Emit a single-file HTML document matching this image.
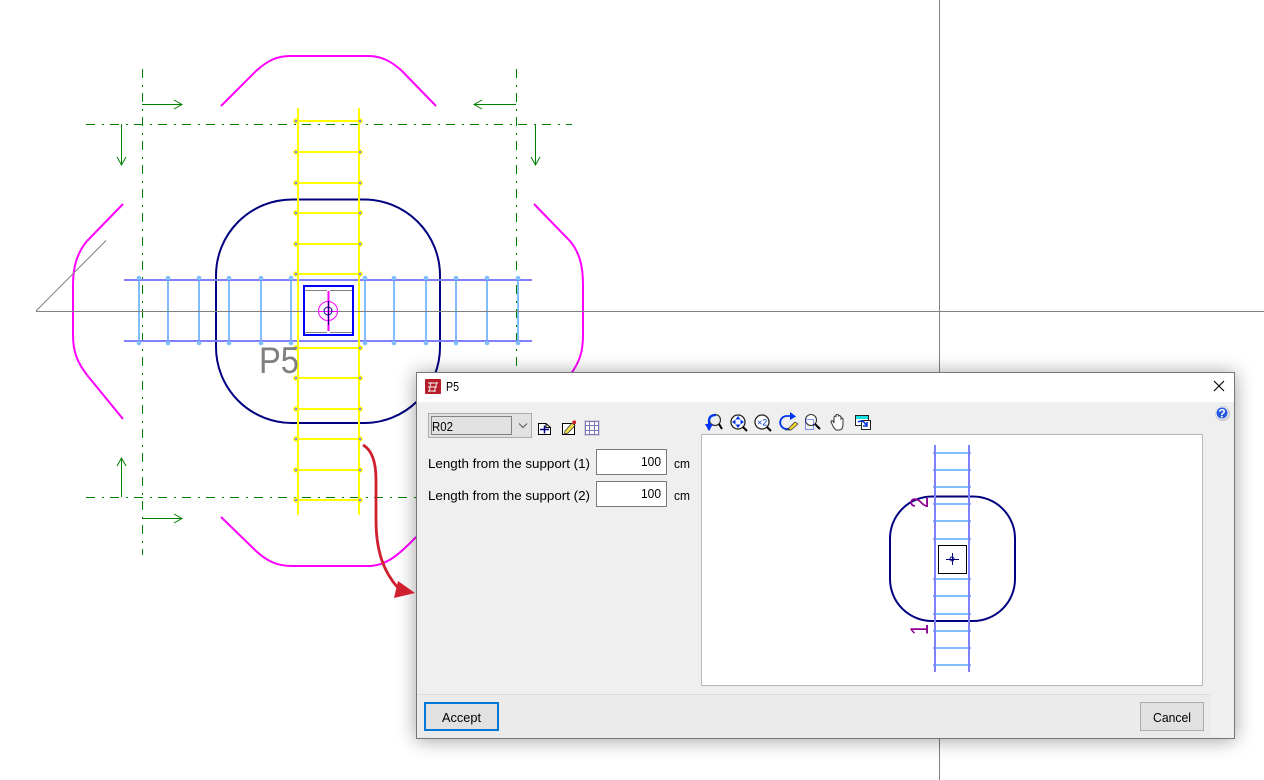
<!DOCTYPE html>
<html><head><meta charset="utf-8"><title>P5</title>
<style>
html,body{margin:0;padding:0;background:#fff;width:1264px;height:780px;overflow:hidden}
svg{position:absolute;left:0;top:0}
text{font-family:"Liberation Sans",sans-serif}
#dlg{position:absolute;left:416px;top:372px;width:817px;height:365px;border:1px solid #777;background:#efefef;box-shadow:0 1px 18px rgba(0,0,0,.38)}
</style></head><body>
<svg width="1264" height="780">
<g fill="none">
<!-- navy -->
<rect x="216" y="199.500" width="224" height="223.500" rx="76" ry="76" stroke="#000080" stroke-width="2"/>
<!-- magenta -->
<g stroke="#ff00ff" stroke-width="2">
<path d="M221 106L256 71C268 60 278 56 290 56H368C380 56 390 60 402 71L436 106"/>
<path d="M123 204L87 241C77 253 73 267 73 285V335C73 351 77 362 87 375L123 419"/>
<path d="M534 204L570 241C580 253 583 267 583 285V335C583 351 580 362 570 375L540 405"/>
<path d="M221 517L256 551C268 562 278 566 292 566H368C384 566 396 558 416 537"/>
</g>
<!-- green -->
<g stroke="#008000" stroke-width="1">
<g stroke-dasharray="9 7 2 6">
<path d="M142.500 69V555"/><path d="M516.500 69V372"/>
<path d="M86 124.500H572"/><path d="M86 497.500H416"/>
</g>
<path d="M142 104.500H181M174 100L182 104.500L174 109"/>
<path d="M142 518.500H181M174 514L182 518.500L174 523"/>
<path d="M516 104.500H475M482 100L474 104.500L482 109"/>
<path d="M121.500 124V164M117 157L121.500 165L126 157"/>
<path d="M535.500 124V164M531 157L535.500 165L540 157"/>
<path d="M121.500 497V459M117 466L121.500 458L126 466"/>
</g>
<!-- light blue rungs -->
<g stroke="#80bfff" stroke-width="2">
<path d="M139 277V344M168 277V344M199 277V344M229 277V344M261 277V344M291 277V344M365 277V344M394 277V344M426 277V344M456 277V344M487 277V344M518 277V344"/>
</g>
<g stroke="#8080ff" stroke-width="2"><path d="M124 280H532M124 341H532"/></g>
<!-- yellow -->
<g stroke="#ffff00" stroke-width="2">
<path d="M298 108V515M359 108V515"/>
<path d="M296 121H361M296 152H361M296 183H361M296 213H361M296 244H361M296 274H361M296 348H361M296 378H361M296 409H361M296 439H361M296 470H361M296 500H361"/>
</g>
<g stroke="#808080" stroke-width="1">
<path d="M939.500 0V780M36 311.500H1264M36 311L106 240.500"/>
</g>
</g>
<!-- dots -->
<g fill="#8080ff" stroke="#ffff00" stroke-width="1.400">
<circle cx="296" cy="121" r="2"/><circle cx="360" cy="121" r="2"/>
<circle cx="296" cy="152" r="2"/><circle cx="360" cy="152" r="2"/>
<circle cx="296" cy="183" r="2"/><circle cx="360" cy="183" r="2"/>
<circle cx="296" cy="213" r="2"/><circle cx="360" cy="213" r="2"/>
<circle cx="296" cy="244" r="2"/><circle cx="360" cy="244" r="2"/>
<circle cx="296" cy="274" r="2"/><circle cx="360" cy="274" r="2"/>
<circle cx="296" cy="348" r="2"/><circle cx="360" cy="348" r="2"/>
<circle cx="296" cy="378" r="2"/><circle cx="360" cy="378" r="2"/>
<circle cx="296" cy="409" r="2"/><circle cx="360" cy="409" r="2"/>
<circle cx="296" cy="439" r="2"/><circle cx="360" cy="439" r="2"/>
<circle cx="296" cy="470" r="2"/><circle cx="360" cy="470" r="2"/>
<circle cx="296" cy="500" r="2"/><circle cx="360" cy="500" r="2"/>
</g>
<g fill="#80bfff">
<circle cx="139" cy="278" r="2.300"/><circle cx="168" cy="278" r="2.300"/><circle cx="199" cy="278" r="2.300"/><circle cx="229" cy="278" r="2.300"/><circle cx="261" cy="278" r="2.300"/><circle cx="291" cy="278" r="2.300"/><circle cx="365" cy="278" r="2.300"/><circle cx="394" cy="278" r="2.300"/><circle cx="426" cy="278" r="2.300"/><circle cx="456" cy="278" r="2.300"/><circle cx="487" cy="278" r="2.300"/><circle cx="518" cy="278" r="2.300"/>
<circle cx="139" cy="343" r="2.300"/><circle cx="168" cy="343" r="2.300"/><circle cx="199" cy="343" r="2.300"/><circle cx="229" cy="343" r="2.300"/><circle cx="261" cy="343" r="2.300"/><circle cx="291" cy="343" r="2.300"/><circle cx="365" cy="343" r="2.300"/><circle cx="394" cy="343" r="2.300"/><circle cx="426" cy="343" r="2.300"/><circle cx="456" cy="343" r="2.300"/><circle cx="487" cy="343" r="2.300"/><circle cx="518" cy="343" r="2.300"/>
</g>
<!-- column -->
<g fill="none">
<path d="M305 290.500H327M330 290.500H352M305 332.500H327M330 332.500H352" stroke="#808080"/>
<rect x="304" y="286" width="49" height="49" stroke="#0000ff" stroke-width="2"/>
<path d="M328.500 291V331" stroke="#ff00ff" stroke-width="2"/>
<path d="M318 311.500H338" stroke="#ff00ff"/>
<circle cx="328" cy="311" r="9.500" stroke="#ff00ff"/>
<circle cx="328" cy="311" r="4" stroke="#000080"/>
<path d="M328.500 301V325" stroke="#000080"/>
</g>
<text x="259" y="373" font-size="37" fill="#808080" textLength="40" lengthAdjust="spacingAndGlyphs">P5</text>
</svg>

<div id="dlg"></div>

<svg width="1264" height="780">
<!-- title bar -->
<rect x="417" y="373" width="817" height="29" fill="#fff"/>
<rect x="425" y="379" width="16" height="15" rx="1" fill="#b51e28"/>
<path d="M428 383H438M428 387H437M428 391H436M431 382L429 392M437 382L434 392" stroke="#e8d0d0" stroke-width="1.200" fill="none"/>
<text x="446" y="391" font-size="13" fill="#000" textLength="13" lengthAdjust="spacingAndGlyphs">P5</text>
<path d="M1214 381L1224 391M1224 381L1214 391" stroke="#000" stroke-width="1.100" fill="none"/>
<!-- footer -->
<rect x="417" y="695" width="794" height="43" fill="#ebebeb"/>
<rect x="417" y="694" width="794" height="1" fill="#dcdcdc"/>
<!-- combo -->
<rect x="428.500" y="413.500" width="103" height="24" fill="#e1e1e1" stroke="#adadad"/>
<rect x="431.500" y="416.500" width="80" height="18" fill="none" stroke="#222" stroke-dasharray="1 1" shape-rendering="crispEdges"/>
<text x="432" y="431" font-size="13" fill="#000" textLength="21" lengthAdjust="spacingAndGlyphs">R02</text>
<path d="M519 423.500L523 427.500L527 423.500" fill="none" stroke="#555" stroke-width="1"/>
<!-- small icons -->
<path d="M538.500 423.500H546L550.500 427.500V434.500H538.500Z" fill="#fff" stroke="#000"/>
<path d="M546 423.500V427.500H550" fill="none" stroke="#000"/>
<path d="M540 429.500H549M544.500 425.500V433.500" stroke="#000080" stroke-width="1.500"/>
<path d="M562.500 423.500H574.500V434.500H562.500Z" fill="#fff" stroke="#000"/>
<path d="M565 431L572 423L575 425.500L568 433L564.500 434Z" fill="#f5e050" stroke="#333" stroke-width=".8"/>
<rect x="572.500" y="420.500" width="3.500" height="3.500" rx="1" fill="#d0202a"/>
<rect x="584" y="420" width="16" height="16" fill="#d4d4d4"/>
<path d="M585.500 421.500H598.500V434.500H585.500ZM585.500 425.500H598.500M585.500 430.500H598.500M589.500 421.500V434.500M594.500 421.500V434.500" fill="#fff" stroke="#7878b8"/>
<!-- labels -->
<text x="428" y="468" font-size="13" fill="#000" textLength="162" lengthAdjust="spacingAndGlyphs">Length from the support (1)</text>
<text x="428" y="500" font-size="13" fill="#000" textLength="162" lengthAdjust="spacingAndGlyphs">Length from the support (2)</text>
<rect x="596.500" y="449.500" width="70" height="25" fill="#fff" stroke="#7a7a7a"/>
<rect x="596.500" y="481.500" width="70" height="25" fill="#fff" stroke="#7a7a7a"/>
<text x="641" y="466" font-size="13" fill="#000" textLength="20" lengthAdjust="spacingAndGlyphs">100</text>
<text x="641" y="498" font-size="13" fill="#000" textLength="20" lengthAdjust="spacingAndGlyphs">100</text>
<text x="674" y="468" font-size="13" fill="#000" textLength="16" lengthAdjust="spacingAndGlyphs">cm</text>
<text x="674" y="500" font-size="13" fill="#000" textLength="16" lengthAdjust="spacingAndGlyphs">cm</text>
<!-- toolbar icons -->
<g fill="none">
<!-- 1 -->
<circle cx="715" cy="420" r="5.500" stroke="#333" stroke-width="1.200"/><path d="M719 424L722 429" stroke="#000" stroke-width="2"/>
<path d="M709 430V421Q709 415 716 415" stroke="#0033ee" stroke-width="2.200"/><path d="M705 424L709 431L713 424Z" fill="#0033ee"/>
<!-- 2 -->
<circle cx="738" cy="422" r="7" stroke="#222" stroke-width="1.300" fill="#fff"/><path d="M743 427L747 431" stroke="#000" stroke-width="2"/>
<path d="M738 416L740.500 419.500H735.500ZM738 428L740.500 424.500H735.500ZM732 422L735.500 419.500V424.500ZM744 422L740.500 419.500V424.500Z" fill="#0033ee"/>
<!-- 3 -->
<circle cx="762" cy="422" r="7" stroke="#222" stroke-width="1.300" fill="#fff"/><path d="M767 427L771 431" stroke="#000" stroke-width="2"/>
<text x="757" y="425.500" font-size="9" fill="#0033cc">×2</text>
<!-- 4 -->
<path d="M793 424A6.500 6.500 0 1 1 787 416H792" stroke="#0033ee" stroke-width="1.800"/><path d="M790 412L796 416.500L790 420Z" fill="#0033ee"/>
<path d="M785 430H791M788 429L795 422L798 424L791 430Z" fill="#f5d830" stroke="#333" stroke-width=".7"/>
<!-- 5 -->
<circle cx="811" cy="420" r="5.500" stroke="#333" stroke-width="1.100" fill="#fff"/><path d="M815 424L820 429" stroke="#000" stroke-width="2"/>
<rect x="805.500" y="419.500" width="8" height="10" stroke="#0033ee" stroke-dasharray="1 1"/>
<!-- 6 -->
<path d="M834 428L831 422Q831 420 833 421L834 423V417Q835 415 836 417V415Q837 414 838.500 415V416Q840 415 841 417V419Q842.500 417 843 419V424Q843 429 840 430H836Z" fill="#fff" stroke="#333"/>
<!-- 7 -->
<rect x="855.500" y="415.500" width="13" height="10" fill="#fff" stroke="#222"/><rect x="856" y="416" width="12" height="3" fill="#14e0e0"/>
<rect x="861.500" y="420.500" width="9" height="9" fill="#fff" stroke="#222"/>
<path d="M858 422Q863 419 866 425M863 426L867 426L867 422" stroke="#0033ee" stroke-width="1.500"/>
</g>
<!-- preview -->
<rect x="701.500" y="434.500" width="501" height="251" fill="#fff" stroke="#b8b8b8"/>
<rect x="890" y="496.500" width="125" height="124.500" rx="42" fill="none" stroke="#000080" stroke-width="2"/>
<path d="M933 453H971M933 470H971M933 487H971M933 504H971M933 521H971M933 539H971M933 579H971M933 596H971M933 614H971M933 631H971M933 648H971M933 665H971" stroke="#80bfff" stroke-width="2"/>
<path d="M935 445V672M969 445V672" stroke="#8080ff" stroke-width="2"/>
<rect x="938.500" y="545.500" width="28" height="28" fill="#fff" stroke="#000"/>
<path d="M952.500 553V565M946 559.500H959" stroke="#000080"/>
<circle cx="952" cy="559" r="2" fill="none" stroke="#000080"/>
<g fill="#900090" font-size="25">
<text transform="translate(928 508) rotate(-90)" textLength="11" lengthAdjust="spacingAndGlyphs">2</text>
<text transform="translate(928 635) rotate(-90)" textLength="11" lengthAdjust="spacingAndGlyphs">1</text>
</g>
<!-- help -->
<circle cx="1222.500" cy="413.500" r="7.500" fill="#c8c8c8"/>
<circle cx="1222" cy="413" r="6.500" fill="#eef"/>
<circle cx="1222" cy="413" r="5.500" fill="#2458e0"/>
<text x="1222" y="417.500" font-size="12" font-weight="bold" fill="#fff" text-anchor="middle">?</text>
<!-- buttons -->
<rect x="425" y="703" width="73" height="27" fill="#e1e1e1" stroke="#0078d7" stroke-width="2"/>
<text x="442" y="722" font-size="13" fill="#000" textLength="39" lengthAdjust="spacingAndGlyphs">Accept</text>
<rect x="1140.500" y="702.500" width="63" height="28" fill="#e1e1e1" stroke="#adadad"/>
<text x="1153" y="722" font-size="13" fill="#000" textLength="38" lengthAdjust="spacingAndGlyphs">Cancel</text>
<!-- red arrow -->
<path d="M363 445C372 450 376 462 376 480V520C376 552 384 572 398 588" fill="none" stroke="#cf2030" stroke-width="2.800"/>
<path d="M398 581L415 593L394 598Z" fill="#cf2030"/>
</svg>
</body></html>
